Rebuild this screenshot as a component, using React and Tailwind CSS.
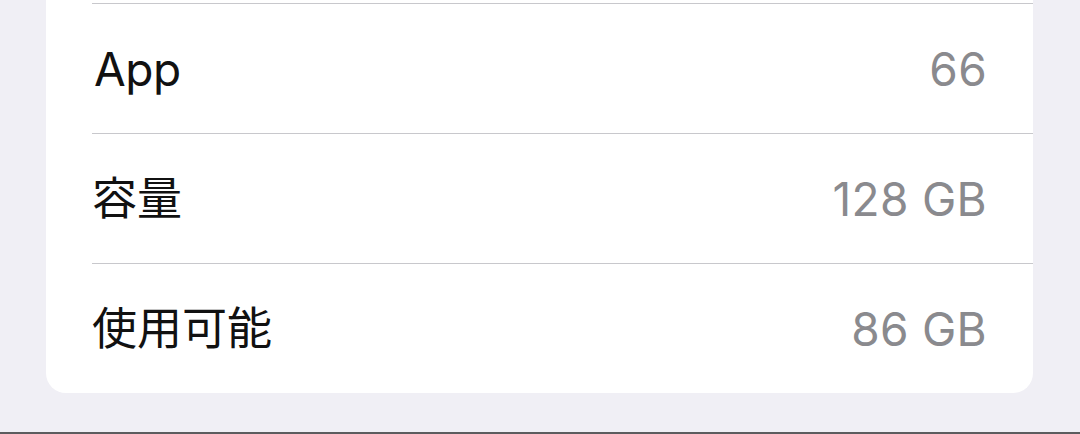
const rows = [
    { label: 'App', value: '66', cjk: false },
    { label: '容量', value: '128 GB', cjk: true },
    { label: '使用可能', value: '86 GB', cjk: true },
];

export default function App() {
    return (
        <div
            className="w-[1080px] h-[434px] bg-[#f0eff5] flex flex-col overflow-hidden"
            style={{ fontFamily: 'Inter, "Noto Sans CJK JP", sans-serif' }}
        >
            <div className="mx-[46px] w-[987px] bg-white rounded-b-[20px] flex flex-col">
                <div className="h-[3px]" />
                {rows.map((row) => (
                    <div key={row.label} className="ml-[46px] border-t border-[#c8c8cc] h-[130px] flex items-center justify-between pr-[46px]">
                        <span className={`leading-none text-[#111] ${row.cjk ? 'text-[45px]' : 'text-[46px] tracking-[-0.5px] pl-[2px]'}`}>{row.label}</span>
                        <span className="text-[46px] leading-none text-[#8a8a8e] tracking-[0.3px]">{row.value}</span>
                    </div>
                ))}
            </div>
            <div className="flex-1" />
            <div className="h-[2px] bg-[#5c5c5e]" />
        </div>
    );
}
